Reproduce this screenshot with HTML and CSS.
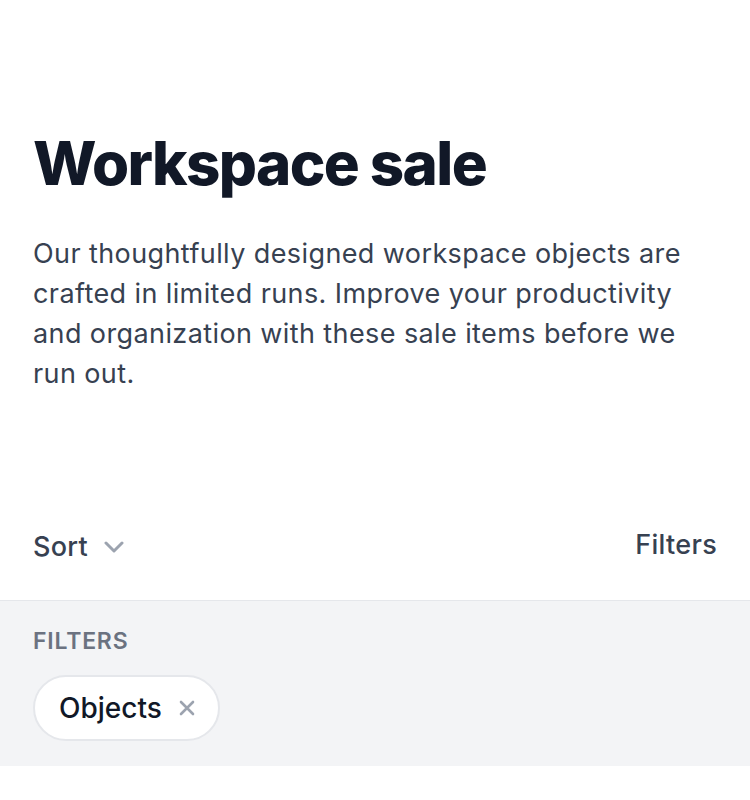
FILE: index.html
```html
<!DOCTYPE html>
<html lang="en">
<head>
<meta charset="utf-8">
<title>Workspace sale</title>
<link rel="stylesheet" href="styles.css">
</head>
<body>
<main class="page">
  <header class="hero">
    <h1 class="hero-title">Workspace sale</h1>
    <p class="hero-text">Our thoughtfully designed workspace objects are crafted in limited runs. Improve your productivity and organization with these sale items before we run out.</p>
  </header>
  <section class="toolbar">
    <button class="sort-btn" type="button">
      <span>Sort</span>
      <svg class="chevron" viewBox="0 0 20 12" width="20" height="12" aria-hidden="true"><polyline points="2,2 10,10 18,2" fill="none" stroke="currentColor" stroke-width="3" stroke-linecap="round" stroke-linejoin="round"/></svg>
    </button>
    <button class="filters-btn" type="button">Filters</button>
  </section>
  <section class="filter-panel">
    <h3 class="filter-label">Filters</h3>
    <div class="chips">
      <span class="chip">
        <span>Objects</span>
        <svg class="chip-x" viewBox="0 0 16 16" width="16" height="16" aria-hidden="true"><path d="M2 2L14 14M14 2L2 14" fill="none" stroke="currentColor" stroke-width="2.6" stroke-linecap="round"/></svg>
      </span>
    </div>
  </section>
</main>
</body>
</html>
```
FILE: styles.css
```css
* { box-sizing: border-box; }
html, body { margin: 0; padding: 0; background: #ffffff; }
body {
  font-family: Inter, "Noto Sans", "Liberation Sans", sans-serif;
  color: #111827;
}
.page { width: 750px; }
.hero {
  padding: 133px 33px 0 33px;
}
.hero-title {
  margin: 0;
  font-size: 60px;
  line-height: 60px;
  font-weight: 800;
  letter-spacing: -1.6px;
  color: #111827;
}
.hero-text {
  margin: 41px 0 0 0;
  font-size: 27px;
  line-height: 40px;
  letter-spacing: 0.4px;
  color: #374151;
  font-weight: 400;
}
.toolbar {
  display: flex;
  justify-content: space-between;
  align-items: center;
  padding: 0 33px;
  margin-top: 97px;
  height: 110px;
  border-bottom: 1px solid #e5e7eb;
}
.sort-btn, .filters-btn {
  background: none;
  border: 0;
  padding: 0;
  font-family: inherit;
  font-size: 27px;
  letter-spacing: 0.3px;
  font-weight: 500;
  color: #374151;
  cursor: pointer;
  display: flex;
  align-items: center;
}
.sort-btn { gap: 16px; margin-top: 2px; }
.filters-btn { margin-top: -2px; }
.chevron { width: 20px; height: 12px; color: #9ca3af; }
.filter-panel {
  background: #f3f4f6;
  padding: 25px 33px 25px 33px;
}
.filter-label {
  margin: 0;
  font-size: 23px;
  line-height: 30px;
  font-weight: 600;
  text-transform: uppercase;
  letter-spacing: 0.8px;
  color: #6b7280;
}
.chips {
  margin-top: 19px;
  display: flex;
}
.chip {
  display: inline-flex;
  align-items: center;
  gap: 17px;
  height: 66px;
  padding: 0 23px 0 24px;
  background: #ffffff;
  border: 2px solid #e5e7eb;
  border-radius: 33px;
  font-size: 28px;
  font-weight: 500;
  color: #111827;
}
.chip-x { width: 16px; height: 16px; color: #9ca3af; }
```
